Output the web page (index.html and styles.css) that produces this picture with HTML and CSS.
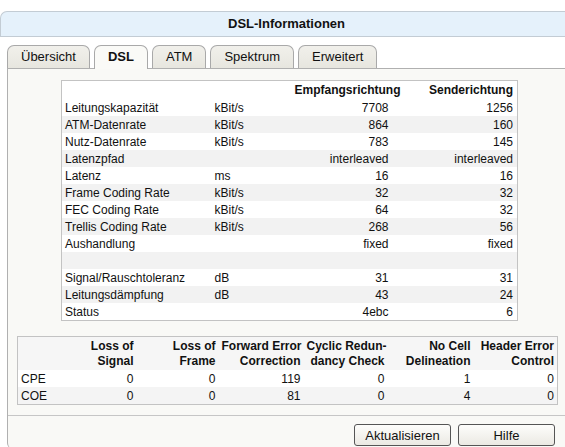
FILE: index.html
```html
<!DOCTYPE html>
<html lang="de">
<head>
    <meta charset="UTF-8">
    <meta name="viewport" content="width=device-width, initial-scale=1.0">
    <title>DSL-Informationen</title>
    <link rel="stylesheet" href="styles.css">
</head>
<body>
<div class="page">

    <!-- Title bar -->
    <div class="header">DSL-Informationen</div>

    <!-- Tabs -->
    <div class="tabs">
        <div class="tab">Übersicht</div>
        <div class="tab active">DSL</div>
        <div class="tab">ATM</div>
        <div class="tab">Spektrum</div>
        <div class="tab">Erweitert</div>
    </div>

    <div class="panel">
        <table class="dsl">
            <colgroup>
                <col style="width: 150px">
                <col style="width: 80px">
                <col style="width: 101px">
                <col style="width: 125px">
            </colgroup>
            <thead>
                <tr>
                    <th></th>
                    <th></th>
                    <th class="num">Empfangsrichtung</th>
                    <th class="num">Senderichtung</th>
                </tr>
            </thead>
            <tbody>
                <tr><td>Leitungskapazität</td><td>kBit/s</td><td class="num">7708</td><td class="num">1256</td></tr>
                <tr><td>ATM-Datenrate</td><td>kBit/s</td><td class="num">864</td><td class="num">160</td></tr>
                <tr><td>Nutz-Datenrate</td><td>kBit/s</td><td class="num">783</td><td class="num">145</td></tr>
                <tr><td>Latenzpfad</td><td></td><td class="num">interleaved</td><td class="num">interleaved</td></tr>
                <tr><td>Latenz</td><td>ms</td><td class="num">16</td><td class="num">16</td></tr>
                <tr><td>Frame Coding Rate</td><td>kBit/s</td><td class="num">32</td><td class="num">32</td></tr>
                <tr><td>FEC Coding Rate</td><td>kBit/s</td><td class="num">64</td><td class="num">32</td></tr>
                <tr><td>Trellis Coding Rate</td><td>kBit/s</td><td class="num">268</td><td class="num">56</td></tr>
                <tr><td>Aushandlung</td><td></td><td class="num">fixed</td><td class="num">fixed</td></tr>
                <tr><td></td><td></td><td></td><td></td></tr>
                <tr><td>Signal/Rauschtoleranz</td><td>dB</td><td class="num">31</td><td class="num">31</td></tr>
                <tr><td>Leitungsdämpfung</td><td>dB</td><td class="num">43</td><td class="num">24</td></tr>
                <tr><td>Status</td><td></td><td class="num">4ebc</td><td class="num">6</td></tr>
            </tbody>
        </table>

        <table class="errors">
            <colgroup>
                <col style="width: 43px">
                <col style="width: 76px">
                <col style="width: 82px">
                <col style="width: 85px">
                <col style="width: 84px">
                <col style="width: 86px">
                <col style="width: 84px">
            </colgroup>
            <thead>
                <tr>
                    <th></th>
                    <th>Loss of<br>Signal</th>
                    <th>Loss of<br>Frame</th>
                    <th>Forward Error<br>Correction</th>
                    <th>Cyclic Redun-<br>dancy Check</th>
                    <th>No Cell<br>Delineation</th>
                    <th>Header Error<br>Control</th>
                </tr>
            </thead>
            <tbody>
                <tr><td>CPE</td><td class="num">0</td><td class="num">0</td><td class="num">119</td><td class="num">0</td><td class="num">1</td><td class="num">0</td></tr>
                <tr><td>COE</td><td class="num">0</td><td class="num">0</td><td class="num">81</td><td class="num">0</td><td class="num">4</td><td class="num">0</td></tr>
            </tbody>
        </table>

        <div class="footer">
            <button class="button">Aktualisieren</button>
            <button class="button">Hilfe</button>
        </div>
    </div>

</div>
</body>
</html>
```

FILE: styles.css
```css
html, body {
    margin: 0;
    overflow: hidden;
}
body {
    font-family: "Liberation Sans", Arial, sans-serif;
    font-size: 12px;
    color: #111;
    background-color: white;
}
.page {
    width: 572px;
    padding-top: 11px;
}
.header {
    height: 24px;
    line-height: 24px;
    background-color: #e5f1fb;
    border: 1px solid #c3ccd4;
    border-right: none;
    border-radius: 7px 0 0 0;
    text-align: center;
    font-size: 13px;
    font-weight: bold;
}
.tabs {
    display: flex;
    align-items: flex-end;
    gap: 4px;
    margin: 8px 0 0 7px;
}
.tab {
    height: 22px;
    line-height: 22px;
    padding: 0 13px;
    font-size: 13px;
    background: linear-gradient(#f1f0eb, #e7e6df);
    border: 1px solid #a9a9a9;
    border-bottom: none;
    border-radius: 7px 7px 0 0;
}
.tab.active {
    position: relative;
    z-index: 1;
    height: 23px;
    margin-bottom: -1px;
    font-weight: bold;
    background: #fafaf7;
}
.panel {
    margin-left: 7px;
    padding-top: 11px;
    background-color: #f9f9f6;
    border-top: 1px solid #b0b0b0;
    border-left: 1px solid #b0b0b0;
    border-bottom-left-radius: 6px;
}
table {
    border-collapse: collapse;
    table-layout: fixed;
    background-color: white;
    border: 1px solid #c3c3c3;
}
th, td {
    padding: 0 4px 0 3px;
    text-align: left;
    white-space: nowrap;
}
th {
    font-weight: bold;
}
.num {
    text-align: right;
}
.dsl {
    width: 456px;
    margin-left: 53px;
}
.dsl th {
    height: 18px;
}
.dsl td {
    height: 17px;
}
.dsl tbody tr:nth-child(even) {
    background-color: #f2f2f2;
}
.errors {
    width: 540px;
    margin: 15px 0 0 9px;
}
.errors th {
    text-align: right;
    vertical-align: bottom;
    line-height: 15px;
    padding: 2px 3px 1px;
    background-color: #f6f6f6;
}
.errors td {
    height: 17px;
    padding: 0 3px;
}
.errors tbody tr:nth-child(even) {
    background-color: #f4f4f4;
}
.footer {
    display: flex;
    justify-content: flex-end;
    gap: 7px;
    margin-top: 10px;
    padding: 8px 17px 3px 0;
    border-top: 1px solid #c6c6c6;
}
.button {
    width: 97px;
    height: 22px;
    padding: 0;
    font-family: "Liberation Sans", Arial, sans-serif;
    font-size: 13px;
    color: #111;
    background: linear-gradient(#fdfdfb, #ebe9e3);
    border: 1px solid #555;
    border-radius: 3px;
}
```
